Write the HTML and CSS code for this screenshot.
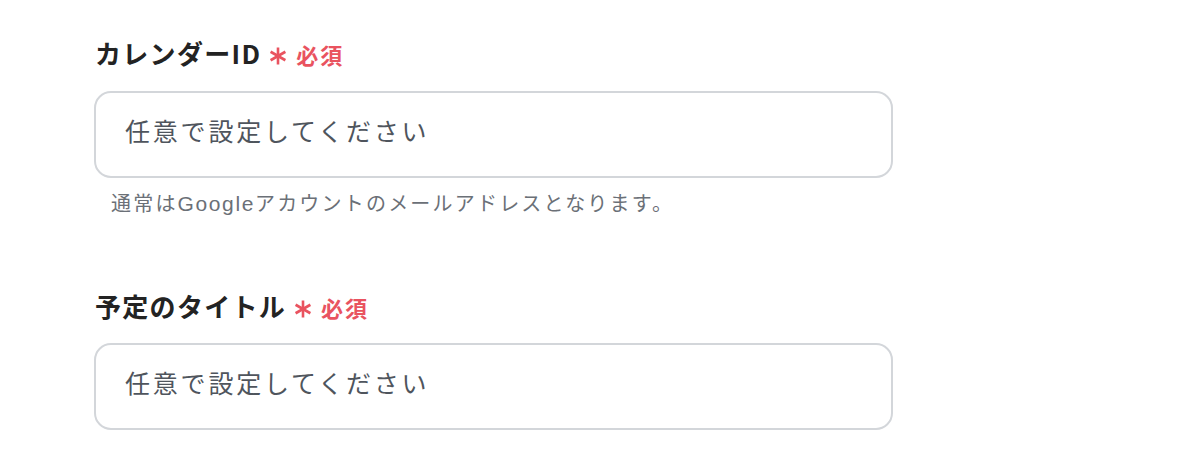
FILE: index.html
```html
<!DOCTYPE html>
<html lang="ja">
<head>
<meta charset="utf-8">
<title>Form</title>
<link rel="stylesheet" href="styles.css">
</head>
<body>
<form class="form">
  <div class="field">
    <div class="label">
      <span class="label-text">カレンダーID</span>
      <svg class="req-mark" viewBox="0 0 18 18" width="18" height="18" aria-hidden="true">
        <g stroke="currentColor" stroke-width="2.6" stroke-linecap="butt">
          <line x1="9" y1="0.5" x2="9" y2="17.5"/>
          <line x1="1.6" y1="4.75" x2="16.4" y2="13.25"/>
          <line x1="1.6" y1="13.25" x2="16.4" y2="4.75"/>
        </g>
      </svg>
      <span class="req-text">必須</span>
    </div>
    <div class="control"><span class="placeholder">任意で設定してください</span></div>
    <p class="hint">通常は<span class="latin">Google</span>アカウントのメールアドレスとなります。</p>
  </div>
  <div class="field field-next">
    <div class="label">
      <span class="label-text">予定のタイトル</span>
      <svg class="req-mark" viewBox="0 0 18 18" width="18" height="18" aria-hidden="true">
        <g stroke="currentColor" stroke-width="2.6" stroke-linecap="butt">
          <line x1="9" y1="0.5" x2="9" y2="17.5"/>
          <line x1="1.6" y1="4.75" x2="16.4" y2="13.25"/>
          <line x1="1.6" y1="13.25" x2="16.4" y2="4.75"/>
        </g>
      </svg>
      <span class="req-text">必須</span>
    </div>
    <div class="control"><span class="placeholder">任意で設定してください</span></div>
  </div>
</form>
</body>
</html>
```

FILE: styles.css
```css
* { box-sizing: border-box; }

html, body {
  margin: 0;
  padding: 0;
  background: #ffffff;
}

body {
  font-family: "Noto Sans CJK JP", "Noto Sans", sans-serif;
  padding: 35px 0 0 94px;
}

.form {
  width: 799px;
  margin: 0;
}

.label {
  display: flex;
  align-items: center;
  height: 36px;
  margin-left: 1px;
  margin-bottom: 20px;
}

.field-next .label {
  margin-bottom: 19px;
}

.label-text {
  font-size: 26px;
  line-height: 36px;
  font-weight: 700;
  letter-spacing: 1.3px;
  color: #232323;
}

.req-mark {
  color: #e9535f;
  margin-left: 8px;
  margin-top: 5px;
  flex: none;
}

.req-text {
  font-size: 22px;
  line-height: 36px;
  font-weight: 700;
  letter-spacing: 2px;
  color: #e9535f;
  margin-left: 9px;
  margin-top: 2px;
}

.control {
  height: 87px;
  border: 2px solid #d3d6da;
  border-radius: 17px;
  padding: 20px 28px 0 29px;
  background: #fff;
}

.placeholder {
  display: block;
  font-size: 25px;
  line-height: 34px;
  letter-spacing: 2.8px;
  color: #4f555d;
}

.hint {
  margin: 11px 0 0 17px;
  font-size: 20px;
  line-height: 28px;
  letter-spacing: 2.2px;
  color: #6b7077;
}

.latin {
  font-family: "Liberation Sans", "Noto Sans", sans-serif;
  font-size: 21px;
  letter-spacing: 1.6px;
}

.field-next {
  margin-top: 70px;
}
```
